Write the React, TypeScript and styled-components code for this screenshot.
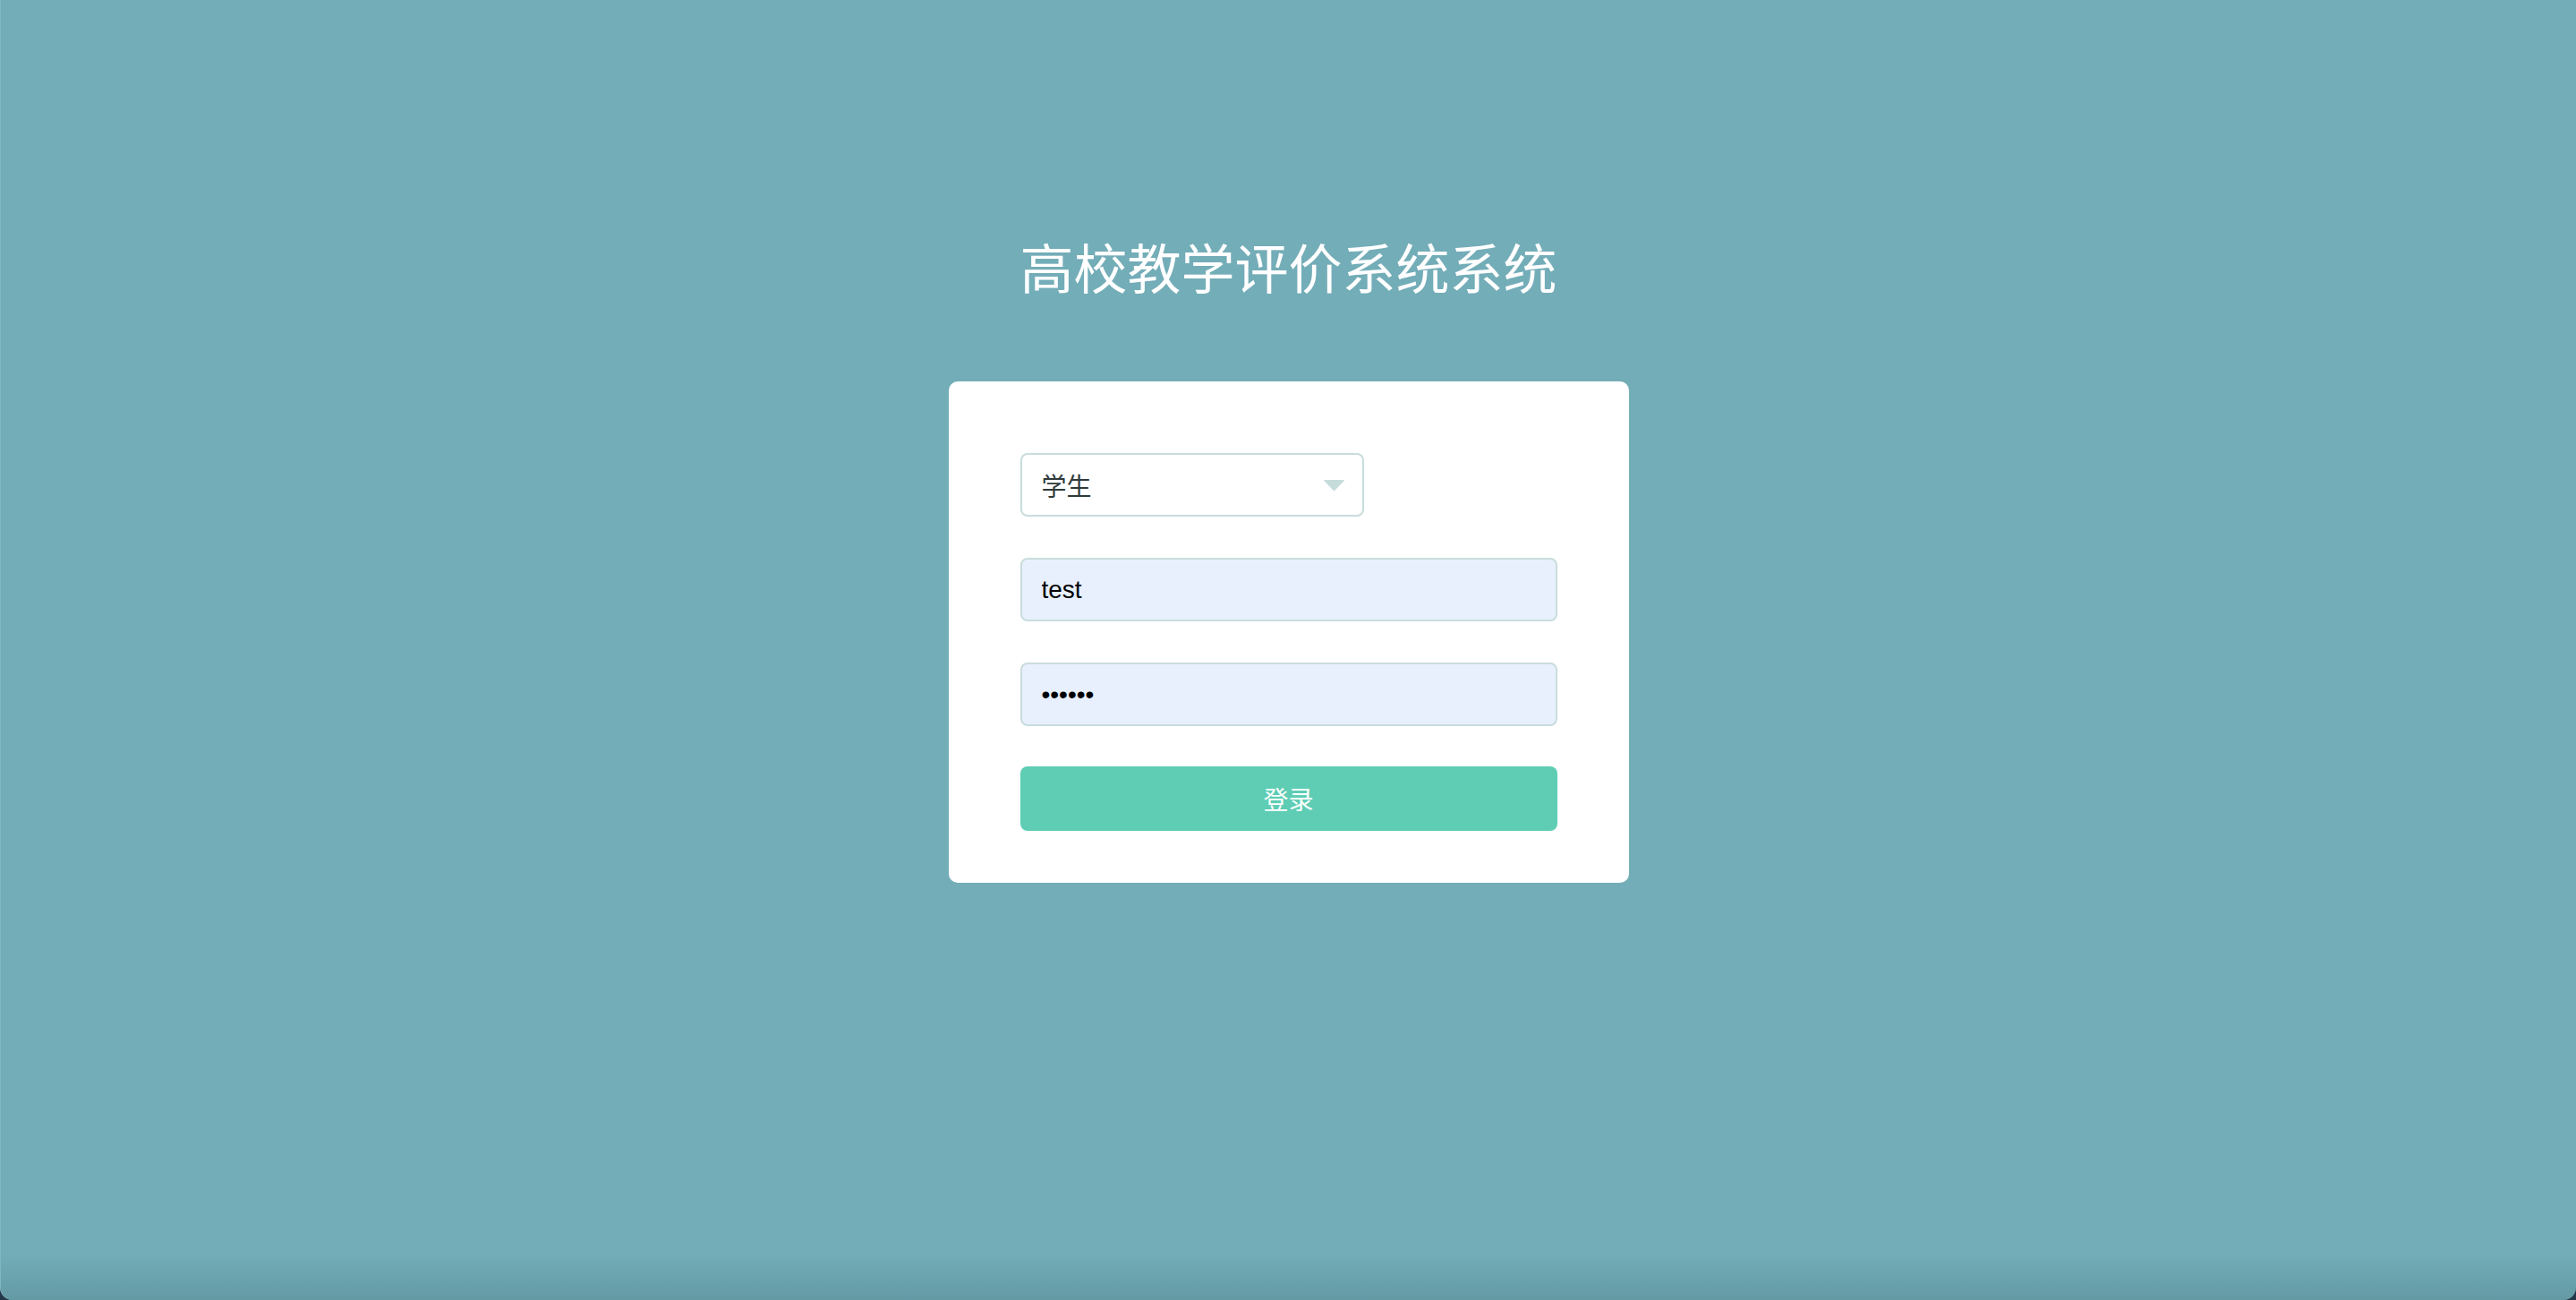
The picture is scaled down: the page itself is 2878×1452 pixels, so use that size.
import React from "react";
import styled, { createGlobalStyle } from "styled-components";

const GlobalStyle = createGlobalStyle`
  html, body {
    margin: 0;
    padding: 0;
    background: #25384a;
  }
  * { box-sizing: border-box; }
`;

const Page = styled.div`
  min-height: 1452px;
  display: flex;
  flex-direction: column;
  align-items: center;
  padding-top: 267px;
  background:
    linear-gradient(to bottom, rgba(90, 140, 150, 0) 0, rgba(90, 140, 150, 0) 1400px, rgba(80, 130, 140, 0.45) 1452px),
    #73adb8;
  border-radius: 0 0 14px 14px;
  border-left: 1px solid #7fb6c0;
  font-family: "Liberation Sans", "Noto Sans CJK SC", sans-serif;
`;

const Title = styled.h1`
  margin: 0 0 99px;
  font-family: "Noto Sans CJK SC", sans-serif;
  font-weight: 400;
  font-size: 60px;
  line-height: 60px;
  color: #ffffff;
  letter-spacing: 0;
`;

const Card = styled.div`
  width: 760px;
  padding: 80px 80px 58px;
  background: #ffffff;
  border-radius: 10px;
  display: flex;
  flex-direction: column;
  gap: 46px;
`;

const SelectBox = styled.div`
  width: 384px;
  height: 71px;
  border: 2px solid #c9dcdc;
  border-radius: 8px;
  background: #ffffff;
  display: flex;
  align-items: center;
  justify-content: space-between;
  padding: 0 19px 0 22px;
  font-size: 28px;
  color: #2e3a3a;
  font-family: "Noto Sans CJK SC", sans-serif;
`;

const Arrow = styled.svg`
  width: 25px;
  height: 14px;
  display: block;
`;

const Field = styled.input`
  width: 600px;
  height: 71px;
  border: 2px solid #c9dcdc;
  border-radius: 8px;
  background: #e8f0fe;
  padding: 0 22px;
  font-size: 28px;
  color: #000000;
  font-family: "Liberation Sans", Arial, sans-serif;
  outline: none;
`;

const Button = styled.button`
  width: 600px;
  height: 72px;
  border: none;
  border-radius: 8px;
  background: #5ecdb4;
  color: #ffffff;
  font-size: 28px;
  font-family: "Noto Sans CJK SC", sans-serif;
  cursor: pointer;
  margin-top: -1px;
`;

export default function App() {
  return (
    <>
      <GlobalStyle />
      <Page>
        <Title>高校教学评价系统系统</Title>
        <Card>
          <SelectBox role="combobox">
            <span>学生</span>
            <Arrow viewBox="0 0 25 14">
              <path d="M2 1 L23 1 Q24.5 1 23.5 2.3 L13.6 12.6 Q12.5 13.6 11.4 12.6 L1.5 2.3 Q0.5 1 2 1 Z" fill="#c6dcdb" />
            </Arrow>
          </SelectBox>
          <Field type="text" value="test" readOnly />
          <Field type="password" value="123456" readOnly />
          <Button type="button">登录</Button>
        </Card>
      </Page>
    </>
  );
}
